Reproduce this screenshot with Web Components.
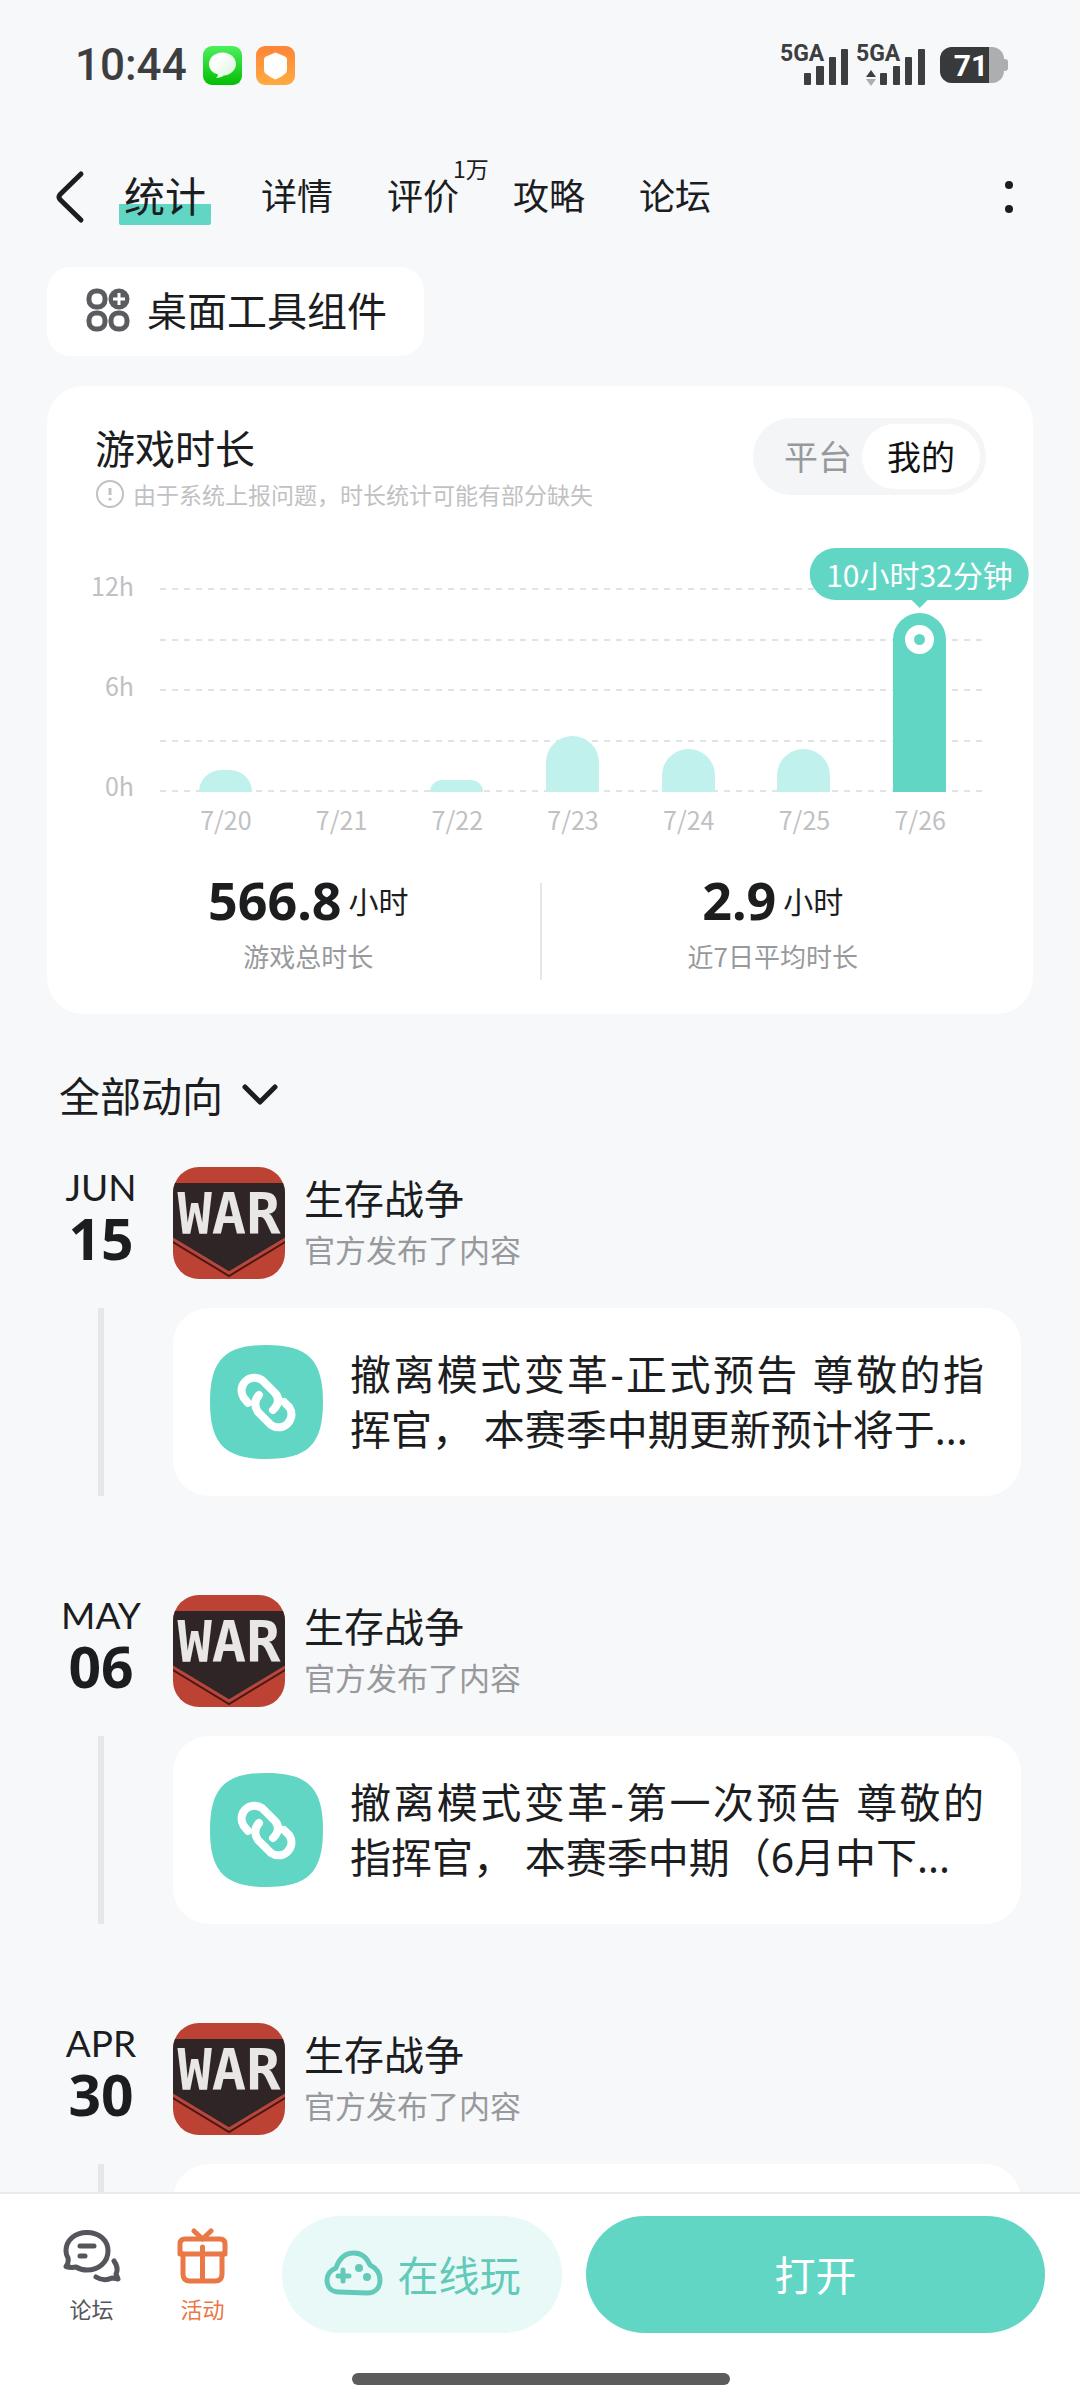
<!DOCTYPE html>
<html lang="zh-CN">
<head>
<meta charset="utf-8">
<meta name="viewport" content="width=device-width, initial-scale=1">
<title>游戏统计</title>
<style>
  :root {
    --teal: #62d6c5;
    --teal-light: #c1f1ec;
    --ink: #1c1d1f;
    --muted: #97999c;
    --faint: #bfc1c4;
    --page: #f7f8fa;
  }

  body {
    margin: 0;
    background: var(--page);
    color: var(--ink);
    font-family: "Noto Sans CJK SC", "Noto Sans", sans-serif;
  }
</style>
</head>
<body>

<app-shell>
  <status-bar slot="top"></status-bar>
  <page-header slot="top">
    <page-tab href="#stats" active>统计</page-tab>
    <page-tab href="#detail">详情</page-tab>
    <page-tab href="#review" count="1万">评价</page-tab>
    <page-tab href="#guide">攻略</page-tab>
    <page-tab href="#forum">论坛</page-tab>
  </page-header>

  <widget-button>桌面工具组件</widget-button>

  <playtime-card>
    <span slot="title">游戏时长</span>
    <span slot="note">由于系统上报问题，时长统计可能有部分缺失</span>
    <bar-chart slot="chart"></bar-chart>
    <stat-figure slot="total" value="566.8" unit="小时">游戏总时长</stat-figure>
    <stat-figure slot="average" value="2.9" unit="小时">近7日平均时长</stat-figure>
  </playtime-card>

  <feed-filter>全部动向</feed-filter>

  <feed-entry month="JUN" day="15">撤离模式变革-正式预告 尊敬的指挥官， 本赛季中期更新预计将于...</feed-entry>
  <feed-entry month="MAY" day="06">撤离模式变革-第一次预告 尊敬的指挥官， 本赛季中期（6月中下...</feed-entry>
  <feed-entry month="APR" day="30"></feed-entry>

  <bottom-bar slot="bottom"></bottom-bar>
</app-shell>

<script>
// Shared base: clones the element's template into an open shadow root
class BaseElement extends HTMLElement {
  constructor() {
    super();
    this.attachShadow({ mode: "open" });
  }

  connectedCallback() {
    let t = document.createElement("template");
    t.innerHTML = this.template;
    this.shadowRoot.replaceChildren(t.content.cloneNode(true));
  }
}

/*
 * Page frame: fixed top, scrolling middle, fixed bottom
 */
class AppShell extends BaseElement {
  get template() {
    return `
    <style>
      :host {
        display: flex;
        flex-direction: column;
        height: 100vh;
      }

      main {
        flex: 1;
        min-height: 0;
        overflow-y: auto;
        scrollbar-width: none;
        padding: 25px 47px 0;
      }
    </style>

    <slot name="top"></slot>
    <main><slot></slot></main>
    <slot name="bottom"></slot>
    `;
  }
}

class StatusBar extends BaseElement {
  get template() {
    return `
    <style>
      :host {
        display: flex;
        align-items: center;
        justify-content: space-between;
        height: 130px;
        padding: 0 72px 0 75px;
        color: #3d3e40;
        font-family: Roboto, sans-serif;
      }

      .group {
        display: flex;
        align-items: center;
        gap: 14px;
      }

      time {
        margin-right: 2px;
        font-size: 44px;
        font-weight: 500;
        line-height: 52px;
      }

      svg {
        display: block;
        fill: currentColor;
      }

      text {
        font-weight: 700;
      }
    </style>

    <div class="group">
      <time>10:44</time>
      <svg width="39" height="39" viewBox="0 0 39 39">
        <defs>
          <linearGradient id="green" x2="0" y2="1"><stop stop-color="#4df05c"/><stop offset="1" stop-color="#04bd05"/></linearGradient>
          <linearGradient id="bubble" x2="1" y2="1"><stop offset=".3" stop-color="#fff"/><stop offset="1" stop-color="#d5f3d5"/></linearGradient>
        </defs>
        <rect width="39" height="39" rx="9" fill="url(#green)"/>
        <path d="M19.500 6.500C27 6.500 33 11.500 33 18S27 29 21 29.500C19 31 16 32 13 32C14 31 15 30 15 28.500C9 27 6 23 6 18C6 11.500 12 6.500 19.500 6.500Z" fill="url(#bubble)"/>
      </svg>
      <svg width="39" height="39" viewBox="0 0 39 39">
        <defs>
          <linearGradient id="orange" x2="0" y2="1"><stop stop-color="#ff8438"/><stop offset="1" stop-color="#ffab3f"/></linearGradient>
        </defs>
        <rect width="39" height="39" rx="9" fill="url(#orange)"/>
        <path d="M19.500 6.500L29 10.500Q31 11.500 31 13V24Q31 26 29.500 27.500Q25 31.500 19.500 33.500Q14 31.500 9.500 27.500Q8 26 8 24V13Q8 11.500 10 10.500Z" fill="#fff"/>
      </svg>
    </div>

    <div class="group">
      <svg width="146" height="60" viewBox="0 -8 146 60">
        <text x="0" y="18" font-size="23">5GA</text>
        <rect x="24" y="30" width="7" height="12" rx="1"/>
        <rect x="36" y="23" width="8" height="19" rx="1"/>
        <rect x="49" y="14" width="7" height="28" rx="1"/>
        <rect x="61" y="6" width="7" height="36" rx="1"/>
        <text x="76" y="18" font-size="23">5GA</text>
        <path d="M86 34l5-7 5 7z"/>
        <path d="M86 36l5 7 5-7z" opacity=".4"/>
        <rect x="100" y="30" width="7" height="12" rx="1"/>
        <rect x="113" y="23" width="7" height="19" rx="1"/>
        <rect x="125" y="14" width="7" height="28" rx="1"/>
        <rect x="138" y="6" width="7" height="36" rx="1"/>
      </svg>
      <svg width="68" height="36" viewBox="0 0 68 36">
        <defs><clipPath id="level"><rect width="49" height="36"/></clipPath></defs>
        <rect width="64" height="36" rx="12" fill="#adaeb0"/>
        <path d="M63 12h2q3 0 3 3v6q0 3-3 3h-2z" fill="#adaeb0"/>
        <rect width="64" height="36" rx="12" fill="#38393a" clip-path="url(#level)"/>
        <text x="31" y="29" font-size="30" text-anchor="middle" fill="#fff">71</text>
      </svg>
    </div>
    `;
  }
}

class PageHeader extends BaseElement {
  get template() {
    return `
    <style>
      :host {
        display: flex;
        align-items: center;
        height: 90px;
        margin-top: 22px;
        padding: 0 55px 0 54px;
      }

      nav {
        flex: 1;
        display: flex;
        align-items: center;
        gap: 54px;
        margin-left: 33px;
      }

      button {
        padding: 0;
        border: 0;
        background: none;
        color: inherit;
      }

      svg {
        display: block;
      }
    </style>

    <button aria-label="返回">
      <svg width="32" height="56" viewBox="0 0 32 56" fill="none" stroke="currentColor" stroke-width="5" stroke-linecap="round" stroke-linejoin="round">
        <path d="M27 5L6 25.500Q4 28 6 30.500L27 51"/>
      </svg>
    </button>
    <nav><slot></slot></nav>
    <button aria-label="更多">
      <svg width="32" height="40" viewBox="0 0 32 40" fill="currentColor">
        <circle cx="16" cy="8" r="4"/>
        <circle cx="16" cy="32" r="4"/>
      </svg>
    </button>
    `;
  }
}

class PageTab extends BaseElement {
  get template() {
    let count = this.getAttribute("count");
    return `
    <style>
      :host {
        display: block;
        position: relative;
        font-size: 36px;
        line-height: 50px;
      }

      :host([active]) {
        font-size: 41px;
      }

      :host([active]) a {
        margin: 0 -4px 0 0;
        padding: 0 5px 6px;
        background: linear-gradient(var(--teal), var(--teal)) 0 100% / 100% 21px no-repeat;
        border-radius: 2px;
      }

      a {
        display: block;
        padding-bottom: 6px;
        color: inherit;
        text-decoration: none;
      }

      sup {
        position: absolute;
        left: 66px;
        bottom: 41px;
        font-size: 23px;
        line-height: 32px;
        white-space: nowrap;
      }
    </style>

    <a href="${this.getAttribute("href")}"><slot></slot></a>
    ${count ? `<sup>${count}</sup>` : ""}
    `;
  }
}

class WidgetButton extends BaseElement {
  get template() {
    return `
    <style>
      :host {
        display: block;
      }

      button {
        display: flex;
        align-items: center;
        gap: 17px;
        padding: 0 37px 0 39px;
        border: 0;
        border-radius: 24px;
        background: #fff;
        color: inherit;
        font: inherit;
        font-size: 40px;
        line-height: 85px;
        padding-bottom: 4px;
      }
    </style>

    <button>
      <svg width="44" height="44" viewBox="0 0 44 44" fill="none" stroke="#5a5c60" stroke-width="5">
        <rect x="3" y="3" width="16" height="16" rx="7"/>
        <rect x="3" y="25" width="16" height="16" rx="7"/>
        <rect x="25" y="25" width="16" height="16" rx="7"/>
        <circle cx="33" cy="11" r="10.500" fill="#5a5c60" stroke="none"/>
        <path d="M33 5v12M27 11h12" stroke="#fff" stroke-width="3"/>
      </svg>
      <slot></slot>
    </button>
    `;
  }
}

class PlaytimeCard extends BaseElement {
  get template() {
    return `
    <style>
      :host {
        display: block;
        margin-top: 30px;
        padding: 32px 47px 34px 48px;
        border-radius: 36px;
        background: #fff;
      }

      header {
        display: flex;
        justify-content: space-between;
        align-items: flex-start;
      }

      h2 {
        margin: 0;
        font-size: 40px;
        font-weight: 400;
        line-height: 58px;
      }

      p {
        display: flex;
        align-items: center;
        gap: 8px;
        margin: 0;
        color: var(--faint);
        font-size: 23px;
        line-height: 36px;
      }

      .switch {
        display: flex;
        padding: 6px;
        border-radius: 39px;
        background: #f4f5f7;
      }

      .switch button {
        padding: 0 25px 2px;
        border: 0;
        border-radius: 33px;
        background: none;
        color: var(--muted);
        font: inherit;
        font-size: 34px;
        line-height: 63px;
      }

      .switch button + button {
        margin-left: -15px;
      }

      .switch .active {
        background: #fff;
        color: #111;
      }

      .stats {
        display: grid;
        grid-template-columns: 1fr 2px 1fr;
        height: 110px;
        margin: 32px -18px 0;
      }

      .stats hr {
        width: 2px;
        margin: 13px 0 0;
        border: 0;
        background: #e6e7e9;
      }
    </style>

    <header>
      <div>
        <h2><slot name="title"></slot></h2>
        <p>
          <svg width="30" height="30" viewBox="0 0 30 30" fill="none" stroke="currentColor" stroke-width="2">
            <circle cx="15" cy="15" r="13"/>
            <path d="M15 9v7M15 19v2.500" stroke-width="3"/>
          </svg>
          <slot name="note"></slot>
        </p>
      </div>
      <div class="switch">
        <button>平台</button>
        <button class="active">我的</button>
      </div>
    </header>
    <slot name="chart"></slot>
    <div class="stats">
      <slot name="total"></slot>
      <hr>
      <slot name="average"></slot>
    </div>
    `;
  }
}

/*
 * Seven day bar chart, bar heights in pixels
 */
class BarChart extends BaseElement {
  get days() {
    return [
      { label: "7/20", height: 22 },
      { label: "7/21", height: 0 },
      { label: "7/22", height: 12 },
      { label: "7/23", height: 56 },
      { label: "7/24", height: 43 },
      { label: "7/25", height: 43 },
      { label: "7/26", height: 179, tip: "10小时32分钟" }
    ];
  }

  get template() {
    let bars = this.days.map(d => `
      <div class="bar ${d.tip ? "active" : ""}" style="height: ${d.height}px">
        ${d.tip ? `<span class="tip">${d.tip}</span><i></i>` : ""}
      </div>`).join("");
    let labels = this.days.map(d => `<span>${d.label}</span>`).join("");

    return `
    <style>
      :host {
        display: grid;
        grid-template-columns: 65px 1fr;
        margin-top: 76px;
        color: var(--faint);
        font-size: 25px;
      }

      .scale {
        display: flex;
        flex-direction: column;
        justify-content: space-between;
        align-items: flex-end;
        margin: -17px 0 -7px;
        padding-right: 26px;
        line-height: 28px;
      }

      .plot {
        display: grid;
        height: 204px;
      }

      .lines, .bars {
        grid-area: 1 / 1;
        display: flex;
        justify-content: space-between;
      }

      .lines {
        flex-direction: column;
      }

      .lines b {
        height: 2px;
        background: repeating-linear-gradient(90deg, #e1e3e5 0 6px, transparent 6px 12px);
      }

      .bars {
        align-items: flex-end;
        padding: 0 40px 0 39px;
      }

      .bar {
        position: relative;
        width: 53px;
        border-radius: 27px 27px 0 0;
        background: var(--teal-light);
      }

      .active {
        background: var(--teal);
      }

      .active i {
        display: block;
        width: 11px;
        height: 11px;
        margin: 12px auto 0;
        border: 9px solid #fff;
        border-radius: 50%;
      }

      .tip {
        position: absolute;
        left: 50%;
        bottom: 100%;
        transform: translateX(-50%);
        margin-bottom: 13px;
        padding: 0 16px;
        border-radius: 26px;
        background: var(--teal);
        color: #fff;
        font-size: 30px;
        line-height: 52px;
        white-space: nowrap;
      }

      .tip::after {
        content: "";
        position: absolute;
        left: 50%;
        top: 100%;
        margin-left: -8px;
        border: 8px solid transparent;
        border-top-color: var(--teal);
        border-bottom: 0;
      }

      .days {
        grid-column: 2;
        display: flex;
        margin-top: 8px;
        padding: 0 8px;
        line-height: 38px;
      }

      .days span {
        flex: 1;
        text-align: center;
      }
    </style>

    <div class="scale"><span>12h</span><span>6h</span><span>0h</span></div>
    <div class="plot">
      <div class="lines"><b></b><b></b><b></b><b></b><b></b></div>
      <div class="bars">${bars}</div>
    </div>
    <div class="days">${labels}</div>
    `;
  }
}

class StatFigure extends BaseElement {
  get template() {
    return `
    <style>
      :host {
        display: block;
        text-align: center;
        color: var(--muted);
        font-size: 26px;
        line-height: 36px;
      }

      div {
        display: flex;
        align-items: center;
        justify-content: center;
        gap: 7px;
        margin-bottom: 8px;
        color: var(--ink);
        font-size: 30px;
        line-height: 60px;
      }

      b {
        font-family: "Noto Sans", sans-serif;
        font-size: 52px;
      }
    </style>

    <div><b>${this.getAttribute("value")}</b><span>${this.getAttribute("unit")}</span></div>
    <slot></slot>
    `;
  }
}

class FeedFilter extends BaseElement {
  get template() {
    return `
    <style>
      :host {
        display: block;
        margin: 50px 0 43px 12px;
      }

      button {
        display: flex;
        align-items: center;
        gap: 18px;
        padding: 0;
        border: 0;
        background: none;
        color: inherit;
        font: inherit;
        font-size: 41px;
        line-height: 60px;
      }
    </style>

    <button>
      <slot></slot>
      <svg width="38" height="24" viewBox="0 0 38 24" fill="none" stroke="currentColor" stroke-width="5" stroke-linecap="round" stroke-linejoin="round">
        <path d="M4 5l15 15L34 5"/>
      </svg>
    </button>
    `;
  }
}

class GameLogo extends BaseElement {
  get template() {
    return `
    <style>
      :host {
        display: block;
        width: 112px;
        height: 112px;
        border-radius: 26px;
        overflow: hidden;
      }

      svg {
        display: block;
      }

      text {
        font-family: "DejaVu Sans Mono", monospace;
        font-weight: 700;
      }
    </style>

    <svg width="112" height="112" viewBox="0 0 112 112">
      <rect width="112" height="112" fill="#bc4233"/>
      <path d="M0 16H112V71L56 105L0 71Z" fill="#2f2526"/>
      <path d="M-2 71L56 106L114 71" fill="none" stroke="#b4483c" stroke-width="3"/>
      <path d="M-2 74L56 109L114 74" fill="none" stroke="#4f1614" stroke-width="2"/>
      <text x="56" y="67" font-size="57" text-anchor="middle" fill="#e8e7e5">WAR</text>
    </svg>
    `;
  }
}

class FeedEntry extends BaseElement {
  get template() {
    return `
    <style>
      :host {
        display: grid;
        grid-template-columns: 108px 1fr;
        gap: 29px 18px;
        margin: 0 12px 99px 0;
      }

      .date {
        text-align: center;
        font-family: Lato, sans-serif;
        font-size: 37px;
        line-height: 40px;
      }

      .date b {
        display: block;
        font-family: "Noto Sans", sans-serif;
        font-size: 57px;
        font-weight: 700;
        line-height: 62px;
      }

      .game {
        display: flex;
        align-items: center;
        gap: 19px;
      }

      h3, p {
        margin: 0;
        line-height: 52px;
      }

      h3 {
        font-size: 40px;
        font-weight: 400;
      }

      p {
        color: var(--muted);
        font-size: 31px;
      }

      .rule {
        justify-self: center;
        width: 6px;
        background: #e4e8eb;
      }

      .post {
        display: flex;
        align-items: center;
        gap: 27px;
        padding: 37px;
        border-radius: 36px;
        background: #fff;
        color: inherit;
        text-decoration: none;
      }

      .post svg {
        flex: none;
      }

      .text {
        flex: 1;
        font-family: "Noto Sans", "Noto Sans CJK SC", sans-serif;
        font-size: 41px;
        line-height: 55px;
        text-align: justify;
      }
    </style>

    <div class="date">${this.getAttribute("month")}<b>${this.getAttribute("day")}</b></div>
    <div class="game">
      <game-logo></game-logo>
      <div>
        <h3>生存战争</h3>
        <p>官方发布了内容</p>
      </div>
    </div>
    <div class="rule"></div>
    <a class="post" href="#post">
      <svg width="113" height="114" viewBox="0 0 113 114" fill="none">
        <path d="M56.500 0C98 0 113 15 113 57S98 114 56.500 114 0 99 0 57 15 0 56.500 0Z" fill="#62d6c5"/>
        <g stroke="#fff" stroke-width="8" stroke-linecap="round">
          <path d="M38 58L33.500 52.500A13 13 0 0 1 52 35L65 48Q72 56 63 65"/>
          <path d="M74 57L79.500 62.500A13 13 0 0 1 61 80L48 67Q42 58 49 50"/>
        </g>
      </svg>
      <div class="text"><slot></slot></div>
    </a>
    `;
  }
}

class BottomBar extends BaseElement {
  get template() {
    return `
    <style>
      :host {
        display: block;
        padding: 22px 35px 18px 36px;
        border-top: 2px solid #e9eaeb;
        background: #fff;
      }

      .row {
        display: flex;
      }

      a {
        display: flex;
        flex-direction: column;
        align-items: center;
        gap: 6px;
        width: 111px;
        padding-top: 12px;
        color: #54565b;
        font-size: 22px;
        line-height: 36px;
        text-decoration: none;
      }

      a.event {
        color: #e97846;
      }

      button {
        display: flex;
        align-items: center;
        justify-content: center;
        gap: 15px;
        height: 117px;
        margin-left: 24px;
        padding: 0 0 4px;
        border: 0;
        border-radius: 59px;
        font: inherit;
        font-size: 41px;
      }

      .play {
        width: 280px;
        background: #e8f9f8;
        color: #63c9b8;
      }

      .open {
        flex: 1;
        background: var(--teal);
        color: #fff;
      }

      .home {
        width: 378px;
        height: 12px;
        margin: 40px auto 0;
        border-radius: 6px;
        background: #5c5c5c;
      }
    </style>

    <div class="row">
      <a href="#forum">
        <svg width="58" height="56" viewBox="0 0 58 56" fill="none" stroke="currentColor" stroke-width="5" stroke-linecap="round" stroke-linejoin="round">
          <path d="M5 30Q3 27 3 23C3 12 12 4.500 24 4.500S45 12 45 23 36 42 24 42Q18 42 13 39Q8 40 3 38.500Q6 35 5 30Z"/>
          <path d="M17 18h14M17 28h5"/>
          <path d="M51 33Q56 40 53 46L55 51Q51 50 49 50Q41 54 33 49"/>
        </svg>
        论坛
      </a>
      <a class="event" href="#event">
        <svg width="51" height="56" viewBox="0 0 51 56" fill="none" stroke="currentColor" stroke-width="5" stroke-linecap="round" stroke-linejoin="round">
          <path d="M3 26V16Q3 11 8 11H43Q48 11 48 16V26Z"/>
          <path d="M6 26V46Q6 53 13 53H38Q45 53 45 46V26"/>
          <path d="M25.500 19V52M17 3L25.500 11L34 3"/>
        </svg>
        活动
      </a>
      <button class="play">
        <svg width="59" height="46" viewBox="0 0 59 46" fill="none" stroke="currentColor" stroke-width="5" stroke-linecap="round" stroke-linejoin="round">
          <path d="M12 18C15 9 21 3 30 3C38 3 43 8 46 15C52 18 56 22 56 30C56 38 51 43 43 43L15 42C7 42 3 37 3 30C3 24 7 20 12 18Z"/>
          <path d="M19 20V31M14 26H25"/>
          <circle cx="35" cy="18" r="4" fill="currentColor" stroke="none"/>
          <circle cx="43" cy="27" r="4" fill="currentColor" stroke="none"/>
        </svg>
        在线玩
      </button>
      <button class="open">打开</button>
    </div>
    <div class="home"></div>
    `;
  }
}

customElements.define("app-shell", AppShell);
customElements.define("status-bar", StatusBar);
customElements.define("page-header", PageHeader);
customElements.define("page-tab", PageTab);
customElements.define("widget-button", WidgetButton);
customElements.define("playtime-card", PlaytimeCard);
customElements.define("bar-chart", BarChart);
customElements.define("stat-figure", StatFigure);
customElements.define("feed-filter", FeedFilter);
customElements.define("game-logo", GameLogo);
customElements.define("feed-entry", FeedEntry);
customElements.define("bottom-bar", BottomBar);
</script>
</body>
</html>
